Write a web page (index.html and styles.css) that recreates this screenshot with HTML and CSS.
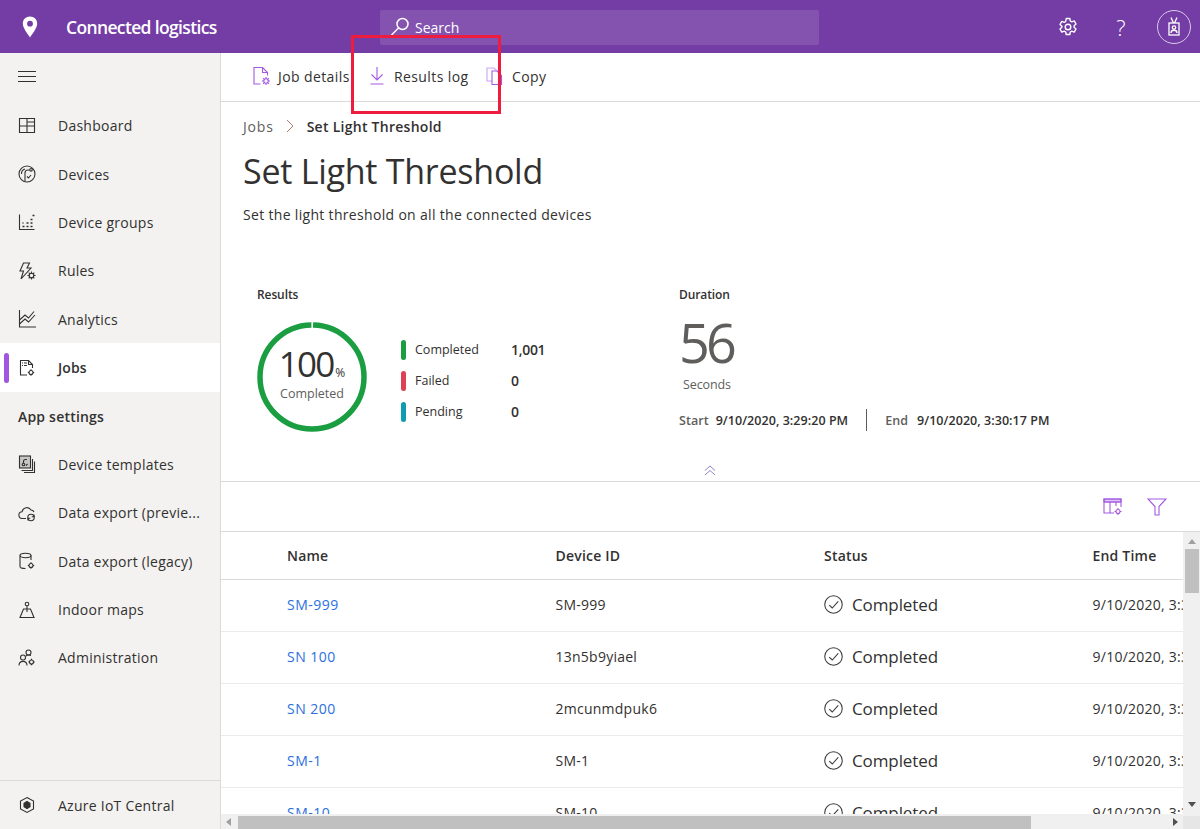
FILE: index.html
```html
<!DOCTYPE html>
<html lang="en">
<head>
<meta charset="utf-8">
<title>Set Light Threshold</title>
<link rel="stylesheet" href="styles.css">
</head>
<body>
<div class="app">
  <header class="topbar">
    <div class="brand">
      <svg class="pin" width="16" height="22" viewBox="0 0 16 22"><path fill-rule="evenodd" fill="#fff" d="M8 0.5C3.8 0.5 0.8 3.6 0.8 7.6c0 4.6 4.6 9.8 7.2 13.9 2.6-4.1 7.2-9.3 7.2-13.9C15.2 3.6 12.2 0.5 8 0.5zM8 4.8a2.9 2.9 0 1 1 0 5.8 2.9 2.9 0 0 1 0-5.8z"/></svg>
      <span class="brand-name">Connected logistics</span>
    </div>
    <div class="search">
      <svg width="20" height="20" viewBox="0 0 20 20" fill="none" stroke="#fff" stroke-width="1.5"><circle cx="12.500" cy="7" r="5.500"/><path d="M8.500 11 1.500 18"/></svg>
      <span>Search</span>
    </div>
    <div class="top-actions">
      <svg class="gear" width="20" height="20" viewBox="0 0 20 20" fill="none" stroke="#fff" stroke-width="1.400"><path d="M8.200 1.500h3.600l.5 2.500 1.500.8 2.400-.9 1.800 3.100-1.900 1.700v1.600l1.900 1.700-1.800 3.100-2.400-.9-1.500.8-.5 2.500H8.200l-.5-2.500-1.500-.8-2.400.9-1.800-3.100 1.900-1.700V9.200L2 7.500l1.800-3.100 2.400.9 1.500-.8z" stroke-linejoin="round"/><circle cx="10" cy="10" r="2.800"/></svg>
      <span class="help">?</span>
      <div class="avatar">
        <svg width="12" height="19" viewBox="0 0 12 19" fill="none" stroke="#fff" stroke-width="1.300"><rect x="1" y="6" width="10" height="12"/><path d="M3 .5 5.500 6M9 .5 6.500 6"/><circle cx="6" cy="10.500" r="1.700"/><path d="M3 16c0-3.700 6-3.700 6 0"/></svg>
      </div>
    </div>
  </header>

  <nav class="sidebar">
    <div class="hamburger"><span></span><span></span><span></span></div>
    <a class="nav-item"><svg class="ico" viewBox="0 0 18 18"><path d="M1.500 1.500h15v14h-15zM1.500 9h15M9 1.500v14M9 5h7.500"/></svg><span>Dashboard</span></a>
    <a class="nav-item"><svg class="ico" viewBox="0 0 18 18"><circle cx="9" cy="9" r="8"/><path d="M7 16V8a3 3 0 0 1 3-3h1.500"/><circle cx="13" cy="4.800" r="1.300"/><path d="M9 11.500l1.500 1.500 2.500-3"/><path d="M3.500 9A5 5 0 0 1 7 4"/></svg><span>Devices</span></a>
    <a class="nav-item"><svg class="ico" viewBox="0 0 18 18"><path d="M1.500 1.500v15h15"/><path class="dots" d="M4.500 13.500h2M8.500 13.500h2M12.500 13.500h4M8.500 10h2M12.500 10h4M12.500 6.500h4M14.500 2.500h2M4.500 10h1"/></svg><span>Device groups</span></a>
    <a class="nav-item"><svg class="ico" viewBox="0 0 18 18"><path d="M5.500 1h6L9 6h4L3 17l2.500-8H2z"/><circle cx="13.500" cy="13.500" r="2.300"/><path d="M13.500 9.500v1.700M13.500 15.800v1.700M9.500 13.500h1.700M15.800 13.500h1.700M10.700 10.700l1.200 1.200M15.100 15.100l1.200 1.200M10.700 16.300l1.200-1.200M15.100 11.900l1.200-1.200"/></svg><span>Rules</span></a>
    <a class="nav-item"><svg class="ico" viewBox="0 0 18 18"><path d="M1.500 0v17h16.500"/><path d="M1.500 14 7 9l3.500 3L17 5"/><path d="M1.500 10 7 5l3.500 3L16 1.500"/></svg><span>Analytics</span></a>
    <a class="nav-item active"><i class="active-bar"></i><svg class="ico" viewBox="0 0 18 18"><path d="M9 16H2.500V1.500h8l4 4V9"/><path d="M10.500 1.500v4h4M4 4h1M6 4h3M4 6.500h1M6 6.500h3"/><circle cx="13" cy="13.500" r="2"/><path d="M13 10.300v1.200M13 15.500v1.200M9.800 13.500H11M15 13.500h1.200"/></svg><span>Jobs</span></a>
    <div class="nav-item nav-heading">App settings</div>
    <a class="nav-item"><svg class="ico" viewBox="0 0 18 18"><rect class="tint" x="1.500" y="1" width="11" height="12"/><path d="M14.500 4v11.500h-11M16.500 6.500V17.500H6"/><circle cx="5.500" cy="9.500" r="1.300"/><path d="M5.500 8V6.500A2 2 0 0 1 7.500 4.500H9M8 10.500l1.500-1.500"/></svg><span>Device templates</span></a>
    <a class="nav-item"><svg class="ico" viewBox="0 0 18 18"><path d="M8 14.500H4.500a3.400 3.400 0 0 1-.4-6.800A4.800 4.800 0 0 1 13 6a3.300 3.300 0 0 1 3 2"/><circle cx="13" cy="13.500" r="3.200"/><path d="M16 10.500v2.300h-2.300M10 16.500v-2.300h2.300"/></svg><span>Data export (previe...</span></a>
    <a class="nav-item"><svg class="ico" viewBox="0 0 18 18"><ellipse cx="7.500" cy="3.500" rx="5.500" ry="2.200"/><path d="M2 3.500v11c0 1.200 2.500 2 5.500 2M13 3.500V8"/><circle cx="13" cy="13.500" r="2"/><path d="M13 10.300v1.200M13 15.500v1.200M9.800 13.500H11M15 13.500h1.200"/></svg><span>Data export (legacy)</span></a>
    <a class="nav-item"><svg class="ico" viewBox="0 0 18 18"><circle cx="9" cy="3" r="1.800"/><path d="M9 5v6M5.500 8h7L16 16.500H2zM9 5v3"/></svg><span>Indoor maps</span></a>
    <a class="nav-item"><svg class="ico" viewBox="0 0 18 18"><circle cx="10.500" cy="3.500" r="2.500"/><circle cx="5" cy="8.500" r="2.500"/><path d="M1 16.500c0-5.500 8-5.500 8 0"/><path d="M8 7c1-.8 3-1.200 5-.5"/><circle cx="13.500" cy="13" r="2"/><path d="M13.500 9.800V11M13.500 15v1.200M10.300 13h1.200M15.500 13h1.200"/></svg><span>Administration</span></a>
    <div class="nav-spacer"></div>
    <a class="nav-item nav-foot"><svg class="ico" viewBox="0 0 18 18"><path d="M9 1.500 15.500 5v8L9 16.500 2.500 13V5z"/><path class="solid" d="M9 5.500 12 7.200v3.600L9 12.500 6 10.800V7.200z"/></svg><span>Azure IoT Central</span></a>
  </nav>

  <main class="main">
    <div class="toolbar">
      <button class="tool tool-job"><svg class="pico" width="20" height="20" viewBox="0 0 20 20"><path d="M8.500 18H2V1.500h8.500l5 5v3"/><path d="M10.500 1.500v5h5"/><circle cx="14" cy="15" r="2.200"/><path d="M14 11v1.800M14 17.200V19M10 15h1.800M16.200 15H18M11.200 12.200l1.200 1.200M15.600 16.600l1.200 1.200M11.200 17.800l1.200-1.200M15.600 13.400l1.200-1.200"/></svg><span>Job details</span></button>
      <button class="tool tool-log"><svg class="pico" width="14" height="18" viewBox="0 0 14 18"><path d="M7 0v13M1.500 7.500 7 13l5.500-5.500M0.500 17h13"/></svg><span>Results log</span></button>
      <button class="tool tool-copy"><svg class="pico" width="17" height="18" viewBox="0 0 17 18"><path class="faint" d="M1 1h7l3 3v10H1z"/><path class="front" d="M6 4h5l4.500 4.500V17.500H6z"/></svg><span>Copy</span></button>
    </div>

    <div class="crumbs"><span class="crumb-link">Jobs</span><svg width="8" height="14" viewBox="0 0 8 14" fill="none" stroke="#b0796a" stroke-width="1"><path d="M1 1l6 6-6 6"/></svg><b>Set Light Threshold</b></div>
    <h1 class="title">Set Light Threshold</h1>
    <p class="desc">Set the light threshold on all the connected devices</p>

    <section class="stats">
      <div class="stat-results">
        <h2 class="stat-title">Results</h2>
        <div class="results-body">
          <div class="ring">
            <svg width="110" height="110" viewBox="0 0 110 110"><circle cx="55" cy="55" r="52" fill="none" stroke="#1b9e41" stroke-width="5.500" stroke-dasharray="324.500 2.200" stroke-dashoffset="-1.100" transform="rotate(-90 55 55)"/></svg>
            <div class="ring-text"><div class="ring-num">100<small>%</small></div><div class="ring-label">Completed</div></div>
          </div>
          <ul class="legend">
            <li><i class="pill green"></i><span class="leg-name">Completed</span><b>1,001</b></li>
            <li><i class="pill red"></i><span class="leg-name">Failed</span><b>0</b></li>
            <li><i class="pill teal"></i><span class="leg-name">Pending</span><b>0</b></li>
          </ul>
        </div>
      </div>
      <div class="stat-duration">
        <h2 class="stat-title">Duration</h2>
        <div class="dur-num">56</div>
        <div class="dur-unit">Seconds</div>
        <div class="dur-times"><span class="t-key">Start</span><span class="t-val">9/10/2020, 3:29:20 PM</span><i class="t-sep"></i><span class="t-key t-end">End</span><span class="t-val">9/10/2020, 3:30:17 PM</span></div>
      </div>
    </section>

    <div class="collapse"><svg width="12" height="11" viewBox="0 0 12 11" fill="none" stroke="#8f86c9" stroke-width="1"><path d="M1 5.500 6 1l5 4.500M1 10 6 5.500l5 4.500"/></svg></div>

    <div class="table-tools">
      <svg class="pico" width="20" height="18" viewBox="0 0 20 18"><path class="tint" d="M1 1h17v3H1z"/><path d="M11 15H1V1h17v8M1 4h17M7 4v11M13 4v4"/><circle cx="15" cy="13.500" r="2"/><path d="M15 10v1.500M15 15.500V17M11.500 13.500H13M17 13.500h1.500"/></svg>
      <svg class="pico" width="20" height="18" viewBox="0 0 20 18"><path d="M1 1h18l-7 7.500V17H8V8.500z"/></svg>
    </div>

    <div class="grid-wrap">
      <div class="grid-row">
        <div class="table-clip">
          <div class="row head"><div>Name</div><div>Device ID</div><div>Status</div><div>End Time</div></div>
          <div class="row"><div><a>SM-999</a></div><div>SM-999</div><div class="status"><svg class="check" viewBox="0 0 18 18"><circle cx="9" cy="9" r="8.300"/><path d="M5 9.500l2.800 2.800L13.500 6"/></svg>Completed</div><div>9/10/2020, 3:30:17 PM</div></div>
          <div class="row"><div><a>SN 100</a></div><div>13n5b9yiael</div><div class="status"><svg class="check" viewBox="0 0 18 18"><circle cx="9" cy="9" r="8.300"/><path d="M5 9.500l2.800 2.800L13.500 6"/></svg>Completed</div><div>9/10/2020, 3:30:17 PM</div></div>
          <div class="row"><div><a>SN 200</a></div><div>2mcunmdpuk6</div><div class="status"><svg class="check" viewBox="0 0 18 18"><circle cx="9" cy="9" r="8.300"/><path d="M5 9.500l2.800 2.800L13.500 6"/></svg>Completed</div><div>9/10/2020, 3:30:17 PM</div></div>
          <div class="row"><div><a>SM-1</a></div><div>SM-1</div><div class="status"><svg class="check" viewBox="0 0 18 18"><circle cx="9" cy="9" r="8.300"/><path d="M5 9.500l2.800 2.800L13.500 6"/></svg>Completed</div><div>9/10/2020, 3:30:17 PM</div></div>
          <div class="row"><div><a>SM-10</a></div><div>SM-10</div><div class="status"><svg class="check" viewBox="0 0 18 18"><circle cx="9" cy="9" r="8.300"/><path d="M5 9.500l2.800 2.800L13.500 6"/></svg>Completed</div><div>9/10/2020, 3:30:17 PM</div></div>
        </div>
        <div class="vscroll"><i class="arr up"></i><i class="vthumb"></i><i class="arr down"></i></div>
      </div>
      <div class="hscroll"><i class="arr left"></i><i class="hthumb"></i><i class="arr right"></i><i class="corner"></i></div>
    </div>
  </main>
  <div class="callout"></div>
</div>
</body>
</html>
```
FILE: styles.css
```css
* { box-sizing: border-box; }
html, body { margin: 0; height: 100%; overflow: hidden; }
body { font-family: "Open Sans", "Noto Sans", sans-serif; color: #323130; background: #fff; }
svg { display: block; flex: none; }

.app { position: relative; width: 1200px; height: 829px; display: grid; grid-template-columns: 221px 979px; grid-template-rows: 53px 776px; overflow: hidden; }

.topbar { grid-column: 1 / 3; background: #743ca5; display: flex; align-items: center; color: #fff; }
.brand { width: 380px; display: flex; align-items: center; padding-left: 22px; }
.brand-name { margin-left: 28px; font-size: 17.5px; font-weight: 600; letter-spacing: -0.65px; }
.search { width: 439px; height: 35px; margin-top: 1px; background: #8353af; border-radius: 2px; display: flex; align-items: center; padding-left: 10px; font-size: 14px; gap: 5px; }
.top-actions { flex: 1; display: flex; align-items: center; padding-left: 239px; }
.help { width: 14px; margin-left: 36px; font-size: 22px; font-weight: 300; line-height: 1; text-align: center; }
.avatar { margin-left: 29px; width: 34px; height: 34px; border: 1px solid #d9cbe8; border-radius: 50%; display: flex; align-items: center; justify-content: center; }

.sidebar { background: #f3f2f1; border-right: 1px solid #dcdad8; display: flex; flex-direction: column; }
.hamburger { height: 48.500px; padding: 18px 0 0 18px; display: flex; flex-direction: column; gap: 4px; }
.hamburger span { display: block; width: 18px; height: 1px; background: #323130; }
.nav-item { position: relative; flex: none; height: 48.400px; display: flex; align-items: center; padding-left: 18px; font-size: 14px; letter-spacing: 0.25px; color: #323130; }
.nav-item span { margin-left: 22px; }
.ico { width: 18px; height: 18px; fill: none; stroke: #323130; stroke-width: 1.100; }
.ico .tint { fill: #c8c6c4; }
.ico .solid { fill: #323130; }
.ico .dots { stroke-width: 1.600; stroke-dasharray: 2 2; }
.active { background: #fff; font-weight: 600; letter-spacing: 0.1px; }
.active-bar { position: absolute; left: 4px; top: 10px; width: 5px; height: 30px; border-radius: 3px; background: #a155e0; }
.nav-heading { font-weight: 600; letter-spacing: 0.2px; }
.nav-spacer { flex: 1; }
.nav-foot { height: 49px; border-top: 1px solid #dcdad8; }

.main { min-width: 0; display: flex; flex-direction: column; }
.toolbar { flex: none; height: 49px; padding-bottom: 2px; border-bottom: 1px solid #dcdad8; display: flex; align-items: center; padding-left: 31px; }
.tool { border: 0; background: none; padding: 0; font: inherit; font-size: 14px; color: #323130; display: flex; align-items: center; letter-spacing: 0.4px; }
.tool span { white-space: nowrap; }
.tool-job { width: 118px; gap: 6px; }
.tool-log { width: 116px; gap: 10px; }
.tool-copy { gap: 9px; }
.pico { fill: none; stroke: #a35ae2; stroke-width: 1.100; }
.pico .tint { fill: #dcc8f0; }
.pico .faint { stroke: #c9a6ef; }
.pico .front { fill: #fff; }

.crumbs { flex: none; height: 28px; margin-top: 10px; padding-left: 22px; display: flex; align-items: center; font-size: 14px; letter-spacing: 0.27px; }
.crumb-link { color: #605e5c; letter-spacing: 0.8px; }
.crumbs svg { margin: 0 13px 0 12px; }
.crumbs b { font-weight: 600; }
.title { flex: none; margin: 10px 0 0 22px; font-size: 34px; line-height: 42px; font-weight: 400; letter-spacing: -0.25px; }
.desc { flex: none; margin: 13px 0 0 22px; font-size: 14px; line-height: 20px; letter-spacing: 0.32px; }

.stats { flex: none; height: 178px; margin-top: 62px; padding-left: 36px; display: flex; }
.stat-title { margin: 0; font-size: 12px; line-height: 16px; font-weight: 600; color: #323130; letter-spacing: -0.1px; }
.stat-results { flex: none; width: 422px; }
.results-body { display: flex; margin-top: 19px; }
.ring { width: 108px; height: 110px; display: grid; }
.ring > * { grid-area: 1 / 1; }
.ring-text { text-align: center; padding-top: 28px; }
.ring-num { font-size: 35px; line-height: 28px; font-weight: 400; letter-spacing: -1.800px; }
.ring-num small { font-size: 12px; letter-spacing: 0; margin-left: 2px; }
.ring-label { margin-top: -1px; font-size: 12.500px; line-height: 16px; color: #605e5c; letter-spacing: 0; }
.legend { list-style: none; margin: 12px 0 0 36px; padding: 0; font-size: 12.500px; }
.legend li { height: 31px; display: flex; align-items: center; }
.pill { width: 5px; height: 20px; border-radius: 3px; }
.green { background: #1b9e41; }
.red { background: #dc4155; }
.teal { background: #0e9cb0; }
.leg-name { width: 96px; margin-left: 9px; letter-spacing: 0; }
.legend b { font-size: 14px; font-weight: 600; letter-spacing: -0.3px; }

.stat-duration { flex: 1; }
.dur-num { margin-top: 6px; font-size: 54px; line-height: 66px; font-weight: 400; color: #605e5c; letter-spacing: -4px; }
.dur-unit { margin: 2px 0 0 4px; font-size: 12.500px; line-height: 16px; color: #605e5c; letter-spacing: -0.1px; }
.dur-times { margin-top: 16px; display: flex; align-items: center; height: 22px; font-size: 12.500px; font-weight: 600; letter-spacing: 0.05px; white-space: nowrap; }
.t-key { color: #605e5c; margin-right: 7px; }
.t-end { margin-right: 9px; }
.t-sep { width: 1px; height: 22px; background: #605e5c; margin: 0 18px; }

.collapse { flex: none; height: 16px; padding-right: 2px; display: flex; justify-content: center; }

.table-tools { flex: none; height: 51px; border-top: 1px solid #dcdad8; border-bottom: 1px solid #dcdad8; display: flex; align-items: center; justify-content: flex-end; gap: 24px; padding-right: 33px; }

.grid-wrap { flex: 1; min-height: 0; display: flex; flex-direction: column; }
.grid-row { flex: 1; min-height: 0; display: flex; }
.table-clip { flex: 1; min-width: 0; overflow: hidden; }
.row { height: 52px; padding-bottom: 2px; display: grid; grid-template-columns: 268.500px 268.500px 268.500px 268.500px; padding-left: 66px; align-items: center; border-bottom: 1px solid #edebe9; font-size: 14px; white-space: nowrap; letter-spacing: 0.25px; }
.row a { color: #2b6fe0; letter-spacing: 0.5px; }
.head { height: 48px; padding-bottom: 0; border-bottom: 1px solid #dcdad8; font-weight: 600; letter-spacing: 0.2px; }
.status { display: flex; align-items: center; gap: 9px; font-size: 17px; letter-spacing: -0.1px; }
.check { width: 19px; height: 19px; fill: none; stroke: #3b3a39; stroke-width: 1; }

.vscroll { flex: none; width: 17px; background: #f0f0f0; display: flex; flex-direction: column; align-items: center; padding: 7px 0; }
.vthumb { width: 14px; height: 44px; margin-top: 5px; background: #c0c0c0; }
.hscroll { flex: none; height: 15px; background: #f0f0f0; display: flex; align-items: center; padding-left: 5px; }
.hthumb { width: 793px; height: 13px; margin-left: 7px; align-self: flex-end; background: #c0c0c0; }
.corner { width: 17px; height: 13px; margin-left: auto; align-self: flex-end; background: #e6e6e6; }
.arr { display: block; width: 0; height: 0; border-style: solid; border-color: transparent; }
.up { border-width: 0 4px 5px; border-bottom-color: #a0a0a0; }
.down { margin-top: auto; border-width: 5px 4px 0; border-top-color: #505050; }
.left { border-width: 4px 5px 4px 0; border-right-color: #a0a0a0; }
.right { margin-left: 142px; border-width: 4px 0 4px 5px; border-left-color: #505050; }

.callout { position: absolute; left: 351px; top: 35px; width: 150px; height: 79px; border: 3px solid #ee1c3e; pointer-events: none; }
```
